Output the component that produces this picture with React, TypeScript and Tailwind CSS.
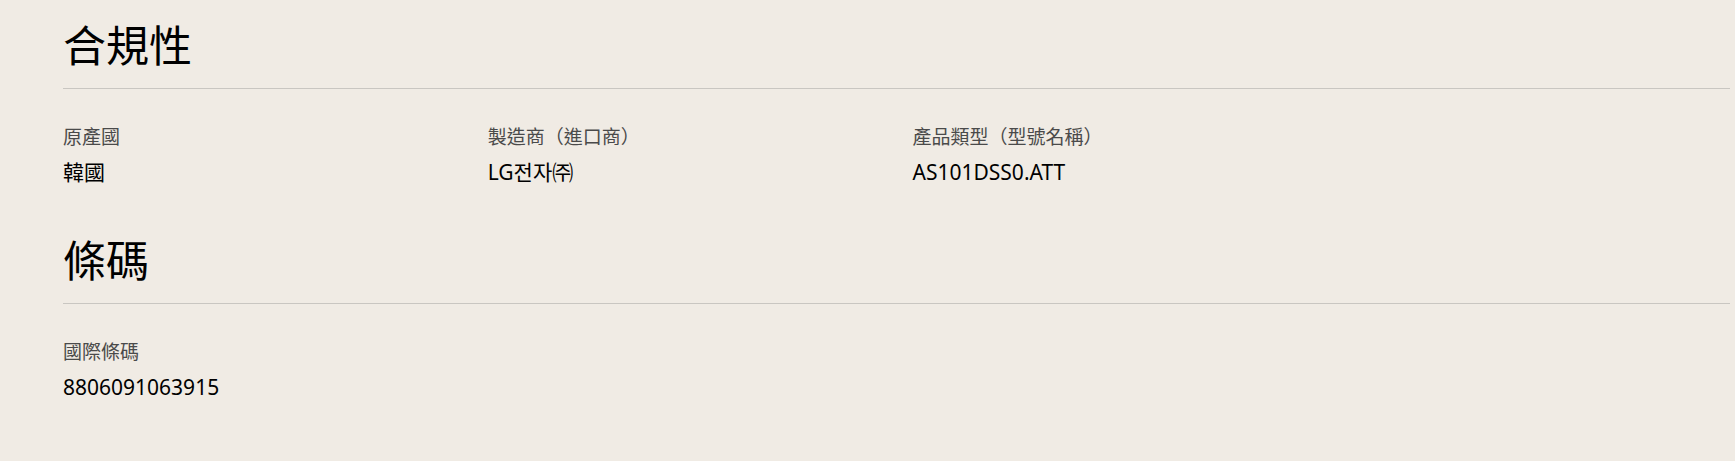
const font = { fontFamily: '"Noto Sans", "Noto Sans CJK TC", sans-serif' }

type Field = { label: string; value: string }

function Section({ title, fields, className }: { title: string; fields: Field[]; className?: string }) {
  return (
    <section className={className}>
      <div className="border-b border-[#c9c6c1] pb-[14px]">
        <h2 className="text-[43px] leading-[56px] font-normal text-black">{title}</h2>
      </div>
      <div className="grid grid-cols-4 gap-x-8 pt-[35px]">
        {fields.map(f => (
          <div key={f.label}>
            <p className="text-[19px] leading-[26px] text-[#4a4a4a]">{f.label}</p>
            <p className="mt-[8px] text-[21px] leading-[28px] text-black">{f.value}</p>
          </div>
        ))}
      </div>
    </section>
  )
}

export default function App() {
  return (
    <div className="min-h-[461px] w-full bg-[#f0ebe4] pl-[63px] pr-[5px] pt-[18px]" style={font}>
      <Section
        title="合規性"
        fields={[
          { label: '原產國', value: '韓國' },
          { label: '製造商（進口商）', value: 'LG전자㈜' },
          { label: '產品類型（型號名稱）', value: 'AS101DSS0.ATT' },
        ]}
      />
      <Section
        className="mt-[47px]"
        title="條碼"
        fields={[{ label: '國際條碼', value: '8806091063915' }]}
      />
    </div>
  )
}
